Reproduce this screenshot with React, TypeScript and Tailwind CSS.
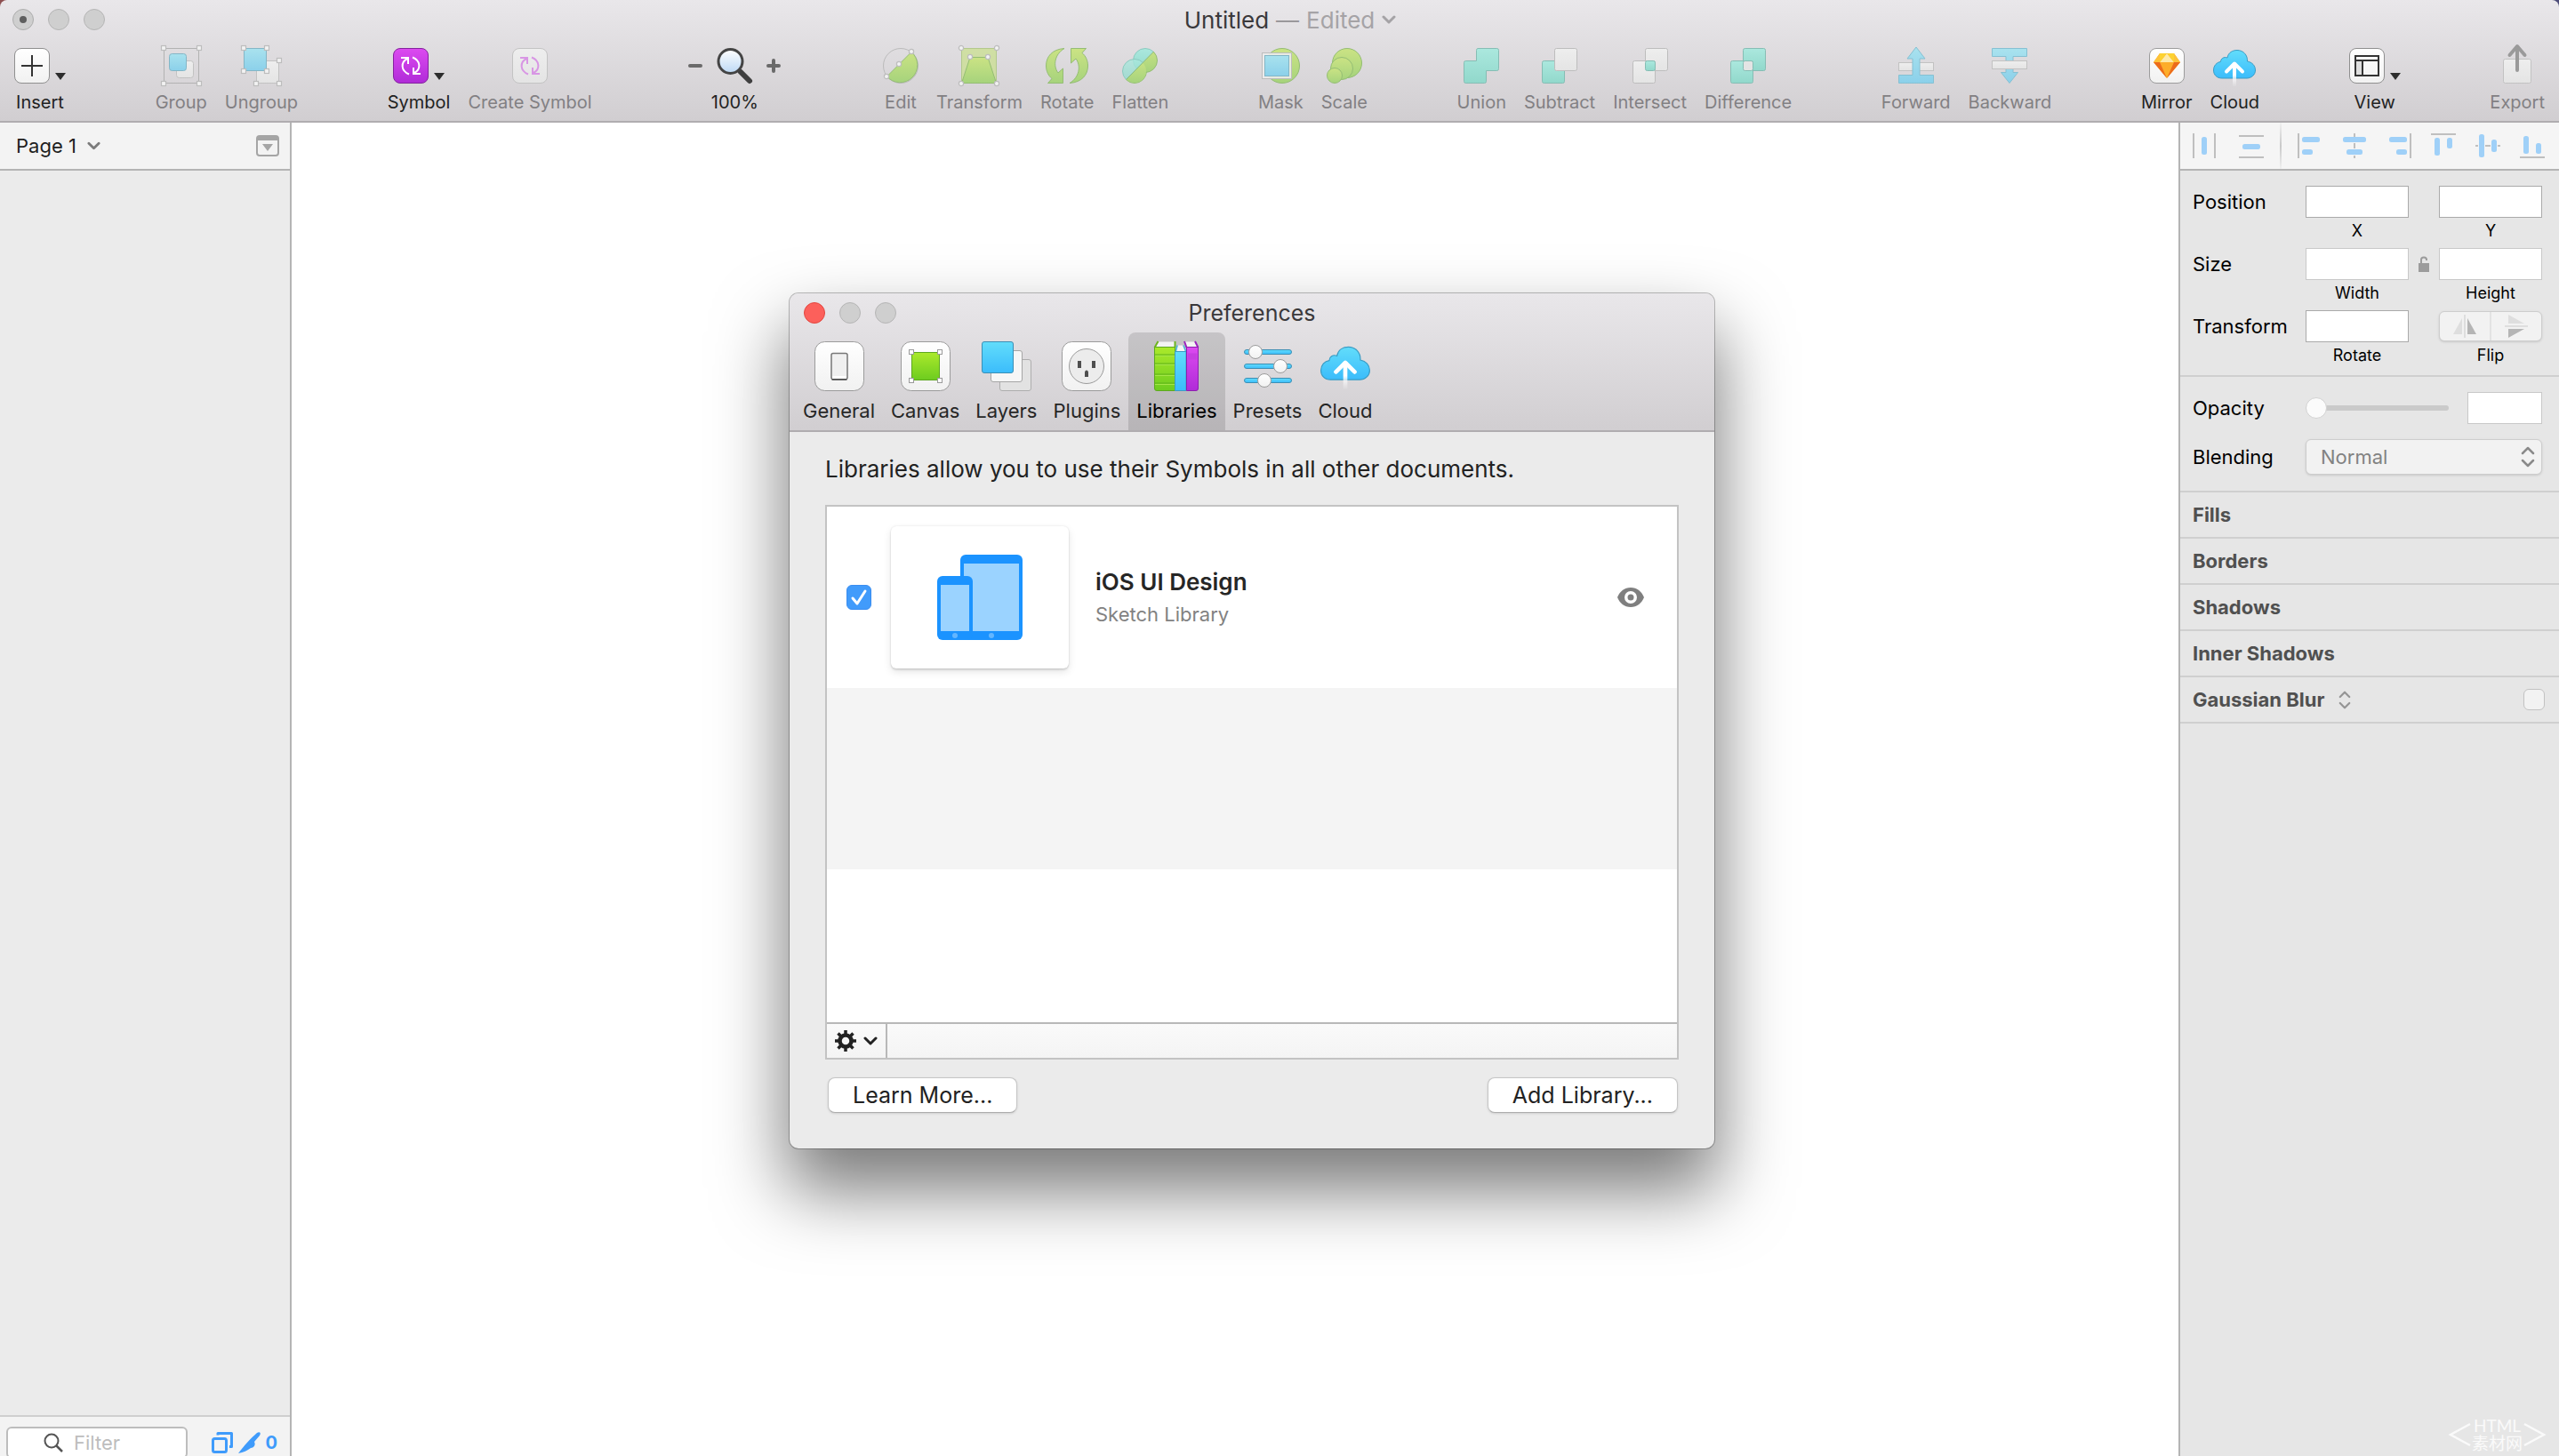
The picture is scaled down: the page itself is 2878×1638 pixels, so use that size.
import { useState } from "react";
import type { ReactNode } from "react";

const toneDark = "text-[#222]";
const toneMuted = "text-[#828083]";

interface ToolProps {
  label: string;
  icon: ReactNode;
  disabled?: boolean;
  menu?: boolean;
}

function Tool({ label, icon, disabled, menu }: ToolProps) {
  return (
    <button type="button" disabled={disabled} className="flex flex-col items-center">
      <span className="flex h-10 items-end gap-[6px]">
        {icon}
        {menu && (
          <svg width="12" height="12" viewBox="0 0 12 12" className="shrink-0">
            <path d="M0 0H12L6 8Z" fill="#2d2d2d" />
          </svg>
        )}
      </span>
      <span className={`mt-[9px] text-[20px] leading-6 whitespace-nowrap ${disabled ? toneMuted : toneDark}`}>
        {label}
      </span>
    </button>
  );
}

function ToolGroup({ children }: { children: ReactNode }) {
  return <div className="flex gap-5">{children}</div>;
}

function Icon({ w = 40, h = 40, children }: { w?: number; h?: number; children: ReactNode }) {
  return (
    <svg width={w} height={h} viewBox={`0 0 ${w} ${h}`} fill="none" className="shrink-0 overflow-visible">
      {children}
    </svg>
  );
}

// Gradients shared by every drawing on the page
function Gradients() {
  const stops = [
    ["g-white", "#ffffff", "#f1f1f1"],
    ["g-fade", "#eeeeee", "#e4e4e4"],
    ["g-sky", "#a9e2ee", "#8bd0ea"],
    ["g-lime", "#cbe384", "#a6d37c"],
    ["g-teal", "#abe8de", "#91d8cb"],
    ["g-magenta", "#dc4bf0", "#b02bd8"],
    ["g-blue", "#62ddfb", "#3bbcfb"],
    ["g-green", "#abe92b", "#6dcc1f"],
    ["g-lens", "#ffffff", "#bcd8f4"],
  ];
  return (
    <svg width="0" height="0" className="absolute">
      <defs>
        {stops.map(([id, from, to]) => (
          <linearGradient key={id} id={id} x1="0" y1="0" x2="0" y2="1">
            <stop offset="0" stopColor={from} />
            <stop offset="1" stopColor={to} />
          </linearGradient>
        ))}
        <linearGradient id="g-stem" gradientUnits="userSpaceOnUse" x1="0" y1="16" x2="0" y2="44">
          <stop offset="0.5" stopColor="#fff" />
          <stop offset="1" stopColor="#fff" stopOpacity="0" />
        </linearGradient>
        <clipPath id="c-upper">
          <path d="M-2 -2H41L-2 42Z" />
        </clipPath>
        <clipPath id="c-lower">
          <path d="M41 -2V42H-2Z" />
        </clipPath>
      </defs>
    </svg>
  );
}

function Handles({ at, round }: { at: number[][]; round?: boolean }) {
  return (
    <g fill="#f2f2f2" stroke="#bdbdbd" strokeWidth="1.2">
      {at.map(([x, y]) =>
        round ? (
          <circle key={`${x}-${y}`} cx={x} cy={y} r="2.6" />
        ) : (
          <rect key={`${x}-${y}`} x={x - 2.5} y={y - 2.5} width="5" height="5" />
        )
      )}
    </g>
  );
}

const InsertIcon = (
  <Icon>
    <rect x="0.5" y="0.5" width="39" height="39" rx="7.5" fill="url(#g-white)" stroke="#8f8f8f" />
    <path d="M20 8V32M8 20H32" stroke="#333" strokeWidth="2" />
  </Icon>
);

const GroupIcon = (
  <Icon>
    <rect x="0.5" y="0.5" width="39" height="39" stroke="#b2b2b2" />
    <rect x="14.5" y="14.5" width="19" height="19" rx="3" fill="url(#g-fade)" stroke="#c2c2c2" />
    <rect x="6.5" y="6.5" width="19" height="19" rx="3" fill="url(#g-sky)" stroke="#84b6c6" />
    <Handles at={[[0, 0], [40, 0], [0, 40], [40, 40]]} />
  </Icon>
);

const UngroupIcon = (
  <Icon>
    <rect x="14.5" y="14.5" width="25" height="25" fill="url(#g-fade)" stroke="#c2c2c2" />
    <rect x="0.5" y="0.5" width="25" height="25" fill="url(#g-sky)" stroke="#84b6c6" />
    <Handles at={[[0, 0], [26, 0], [0, 26], [26, 26], [40, 14], [14, 40], [40, 40]]} />
  </Icon>
);

const symbolArrows = "M9 11H17V18M18 29.5C8.500 25.500 8.500 16 16 12M31 29H23V22M22 10.500C31.500 14.500 31.500 24 24 28";

const SymbolIcon = (
  <Icon>
    <rect x="0.5" y="0.5" width="39" height="39" rx="7.5" fill="url(#g-magenta)" stroke="#84239e" />
    <path d={symbolArrows} stroke="#fff" strokeWidth="2" />
  </Icon>
);

const CreateSymbolIcon = (
  <Icon>
    <rect x="0.5" y="0.5" width="39" height="39" rx="7.5" fill="url(#g-fade)" stroke="#c3c3c3" />
    <path d={symbolArrows} stroke="#d896e4" strokeWidth="2" />
  </Icon>
);

const EditIcon = (
  <Icon>
    <circle cx="20" cy="20" r="19.5" stroke="#bbb" />
    <path d="M4.500 32L32 4.500A19.500 19.500 0 1 1 4.500 32Z" fill="url(#g-lime)" stroke="#94bd74" />
    <Handles round at={[[4, 32], [18, 18], [32, 4]]} />
  </Icon>
);

const TransformIcon = (
  <Icon>
    <rect x="0.5" y="0.5" width="39" height="39" fill="#c9e08a" fillOpacity="0.7" stroke="#b3c98c" />
    <path d="M10 10.500H30L39.500 39.500H0.500Z" fill="url(#g-lime)" stroke="#94bd74" />
    <Handles round at={[[0, 0], [40, 0], [10, 10], [30, 10], [0, 40], [40, 40]]} />
  </Icon>
);

const RotateIcon = (
  <Icon w={48}>
    <g fill="url(#g-lime)" stroke="#94bd74">
      <path d="M21 0.500C7 1.500 0.500 10 0.500 20C0.500 26 3 31 7 34.500L2.500 39.500H19.500V23L14 28C8 20 10 7 21 0.500Z" />
      <path d="M27 39.500C41 38.500 47.500 30 47.500 20C47.500 14 45 9 41 5.500L45.500 0.500H28.500V17L34 12C40 20 38 33 27 39.500Z" />
    </g>
  </Icon>
);

const FlattenIcon = (
  <Icon>
    <g clipPath="url(#c-lower)" fill="url(#g-lime)">
      <circle cx="14" cy="26" r="13.500" stroke="#94bd74" />
      <circle cx="26" cy="14" r="13.500" stroke="#94bd74" />
      <circle cx="14" cy="26" r="13" />
    </g>
    <g clipPath="url(#c-upper)" fill="url(#g-teal)" stroke="#8bcabf">
      <circle cx="26" cy="14" r="13.500" />
      <circle cx="14" cy="26" r="13.500" fillOpacity="0.8" />
    </g>
    <path d="M35.500 4L4.500 35.500" stroke="#86b982" />
  </Icon>
);

const MaskIcon = (
  <Icon w={43}>
    <circle cx="23" cy="20" r="19.500" fill="url(#g-lime)" stroke="#94bd74" />
    <rect x="0.5" y="5.500" width="33" height="29" fill="#ececec" fillOpacity="0.9" stroke="#bdbdbd" />
    <rect x="3.500" y="8.500" width="27" height="23" fill="url(#g-sky)" stroke="#84b6c6" />
  </Icon>
);

const ScaleIcon = (
  <Icon>
    <g fill="url(#g-lime)" stroke="#94bd74">
      <circle cx="23" cy="17" r="16.500" />
      <circle cx="17" cy="23" r="12.500" />
      <circle cx="9" cy="31" r="8.500" />
    </g>
  </Icon>
);

const UnionIcon = (
  <Icon>
    <path
      d="M16 0.500H37.500A2 2 0 0 1 39.500 2.500V23.500A2 2 0 0 1 37.500 25.500H25.500V37.500A2 2 0 0 1 23.500 39.500H2.500A2 2 0 0 1 0.500 37.500V16.500A2 2 0 0 1 2.500 14.500H14.500V2.500A2 2 0 0 1 16 0.500Z"
      fill="url(#g-teal)"
      stroke="#86bdb4"
    />
  </Icon>
);

const SubtractIcon = (
  <Icon>
    <rect x="0.5" y="14.500" width="25" height="25" rx="2" fill="url(#g-teal)" stroke="#86bdb4" />
    <rect x="14.500" y="0.5" width="25" height="25" rx="2" fill="url(#g-fade)" stroke="#bdbdbd" />
  </Icon>
);

const IntersectIcon = (
  <Icon>
    <rect x="14.500" y="0.5" width="25" height="25" rx="2" fill="url(#g-fade)" stroke="#bdbdbd" />
    <rect x="0.5" y="14.500" width="25" height="25" rx="2" fill="url(#g-fade)" stroke="#bdbdbd" />
    <rect x="14.500" y="14.500" width="11" height="11" rx="2" fill="url(#g-teal)" stroke="#86bdb4" />
  </Icon>
);

const DifferenceIcon = (
  <Icon>
    <rect x="14.500" y="0.5" width="25" height="25" rx="2" fill="url(#g-teal)" stroke="#86bdb4" />
    <rect x="0.5" y="14.500" width="25" height="25" rx="2" fill="url(#g-teal)" stroke="#86bdb4" />
    <rect x="14.500" y="14.500" width="11" height="11" rx="2" fill="#e4e4e4" stroke="#86bdb4" />
  </Icon>
);

const ForwardIcon = (
  <Icon>
    <rect x="0.5" y="16.500" width="39" height="9" fill="url(#g-fade)" stroke="#c2c2c2" />
    <path
      d="M20 -1L30 12H24V30.500H39.500V39.500H0.500V30.500H16V12H10Z"
      fill="url(#g-sky)"
      stroke="#86c0d2"
    />
  </Icon>
);

const BackwardIcon = (
  <Icon>
    <path
      d="M0.500 0.500H39.500V9.500H24V27.500H29.500L20 39.500L10.500 27.500H16V9.500H0.500Z"
      fill="url(#g-sky)"
      stroke="#86c0d2"
    />
    <rect x="0.5" y="14.500" width="39" height="9" fill="url(#g-fade)" stroke="#c2c2c2" />
  </Icon>
);

const MirrorIcon = (
  <Icon>
    <rect x="0.5" y="0.5" width="39" height="39" rx="7.500" fill="url(#g-white)" stroke="#9c9c9c" />
    <path d="M12 6H28L35 16L20 34L5 16Z" fill="#fdad2a" />
    <path d="M12 6L5 16H12ZM28 6L35 16H28Z" fill="#fdc23a" />
    <path d="M20 6L12 16H28Z" fill="#feeaa9" />
    <path d="M12 6H20L12 16ZM28 6H20L28 16Z" fill="#fdd231" />
    <path d="M5 16H12L20 34ZM35 16H28L20 34Z" fill="#ec6c1c" />
  </Icon>
);

const cloudShapes = (
  <>
    <path
      d="M10 34C4 34 0.500 30 0.500 25C0.500 20 4 16 8.500 15.500C8.500 12 12 9.500 16 11C17 5 22 2.500 27 2.500C34 2.500 39 8 38.500 15C44 16 47.500 20 47.500 25C47.500 30 43 34 38 34Z"
      fill="url(#g-blue)"
      stroke="#3b9cc4"
    />
    <path d="M22 17H26V43H22Z" fill="url(#g-stem)" />
    <path d="M15 26.500L24 17.500L33 26.500" stroke="#fff" strokeWidth="4" strokeLinecap="round" strokeLinejoin="round" />
  </>
);

const CloudIcon = <Icon w={48}>{cloudShapes}</Icon>;

const ViewIcon = (
  <Icon>
    <rect x="0.5" y="0.5" width="39" height="39" rx="7.500" fill="url(#g-white)" stroke="#8f8f8f" />
    <rect x="7" y="15" width="8" height="16" fill="#dedede" />
    <path d="M7 9H33V31H7ZM7 14H33M15 14V31" stroke="#333" strokeWidth="2" />
  </Icon>
);

const ExportIcon = (
  <Icon w={32}>
    <rect x="0.5" y="12.500" width="31" height="27" rx="2" fill="url(#g-fade)" stroke="#c2c2c2" />
    <path d="M16 25V-1M7.500 8L16 -2L24.500 8" stroke="#9a9a9a" strokeWidth="4" strokeLinecap="round" strokeLinejoin="round" />
  </Icon>
);

function ZoomTool() {
  return (
    <div className="flex flex-col items-center pr-[14px] pl-2">
      <div className="flex h-10 items-center gap-4">
        <button type="button" aria-label="Zoom out">
          <Icon w={16} h={16}>
            <path d="M2 8H14" stroke="#6a6a6a" strokeWidth="4" strokeLinecap="round" />
          </Icon>
        </button>
        <Icon>
          <path d="M27 27L37 37" stroke="#3f3f3f" strokeWidth="6" strokeLinecap="round" />
          <circle cx="15.500" cy="15" r="13.500" fill="url(#g-lens)" stroke="#444" strokeWidth="3" />
        </Icon>
        <button type="button" aria-label="Zoom in">
          <Icon w={16} h={16}>
            <path d="M2 8H14M8 2V14" stroke="#6a6a6a" strokeWidth="4" strokeLinecap="round" />
          </Icon>
        </button>
      </div>
      <span className={`mt-[9px] text-[20px] leading-6 ${toneDark}`}>100%</span>
    </div>
  );
}

function Chevron({ color, w = 16 }: { color: string; w?: number }) {
  return (
    <svg width={w} height="10" viewBox="0 0 16 10" fill="none" className="shrink-0">
      <path d="M2 2L8 8L14 2" stroke={color} strokeWidth="3" strokeLinecap="round" strokeLinejoin="round" />
    </svg>
  );
}

function Light({ className, dot }: { className: string; dot?: boolean }) {
  return (
    <button type="button" aria-label="Window control" className={`flex size-6 items-center justify-center rounded-full border ${className}`}>
      {dot && <span className="size-2 rounded-full bg-[#5f5f5f]" />}
    </button>
  );
}

function AppHeader() {
  return (
    <div className="bg-linear-to-r from-[#8d4f50] to-[#4c4c78]">
      <header className="h-[138px] rounded-t-lg border-b-2 border-[#b0adb0] bg-linear-to-b from-[#e9e7ea] to-[#d1ced1]">
        <div className="grid h-11 grid-cols-3 items-center">
          <div className="flex gap-4 pl-[14px]">
            <Light className="border-[#adadad] bg-[#cfcfcf]" dot />
            <Light className="border-[#b5b5b5] bg-[#cfcfcf]" />
            <Light className="border-[#b5b5b5] bg-[#cfcfcf]" />
          </div>
          <h1 className="flex items-center justify-center gap-2 pl-6 text-[26px] text-[#3a393b]">
            Untitled
            <span className="text-[#9a989b]">—</span>
            <span className="text-[#a5a3a6]">Edited</span>
            <Chevron color="#a5a3a6" />
          </h1>
        </div>
        <div className="flex justify-between px-4 pt-[10px]">
          <Tool label="Insert" icon={InsertIcon} menu />
          <ToolGroup>
            <Tool label="Group" icon={GroupIcon} disabled />
            <Tool label="Ungroup" icon={UngroupIcon} disabled />
          </ToolGroup>
          <ToolGroup>
            <Tool label="Symbol" icon={SymbolIcon} menu />
            <Tool label="Create Symbol" icon={CreateSymbolIcon} disabled />
          </ToolGroup>
          <ZoomTool />
          <ToolGroup>
            <Tool label="Edit" icon={EditIcon} disabled />
            <Tool label="Transform" icon={TransformIcon} disabled />
            <Tool label="Rotate" icon={RotateIcon} disabled />
            <Tool label="Flatten" icon={FlattenIcon} disabled />
          </ToolGroup>
          <ToolGroup>
            <Tool label="Mask" icon={MaskIcon} disabled />
            <Tool label="Scale" icon={ScaleIcon} disabled />
          </ToolGroup>
          <ToolGroup>
            <Tool label="Union" icon={UnionIcon} disabled />
            <Tool label="Subtract" icon={SubtractIcon} disabled />
            <Tool label="Intersect" icon={IntersectIcon} disabled />
            <Tool label="Difference" icon={DifferenceIcon} disabled />
          </ToolGroup>
          <ToolGroup>
            <Tool label="Forward" icon={ForwardIcon} disabled />
            <Tool label="Backward" icon={BackwardIcon} disabled />
          </ToolGroup>
          <ToolGroup>
            <Tool label="Mirror" icon={MirrorIcon} />
            <Tool label="Cloud" icon={CloudIcon} />
          </ToolGroup>
          <Tool label="View" icon={ViewIcon} menu />
          <Tool label="Export" icon={ExportIcon} disabled />
        </div>
      </header>
    </div>
  );
}

function PagesPanel() {
  return (
    <aside className="flex w-[328px] shrink-0 flex-col border-r-2 border-[#b4b4b4] bg-[#ebebeb]">
      <div className="flex h-[54px] items-center justify-between border-b-2 border-[#b4b4b4] bg-[#f3f3f3] pr-3 pl-[18px]">
        <button type="button" className="flex items-center gap-3 text-[22px] text-[#1e1e1e]">
          Page 1
          <Chevron color="#7b7b7b" w={15} />
        </button>
        <button type="button" aria-label="Toggle page list">
          <Icon w={26} h={24}>
            <rect x="1" y="1" width="24" height="22" rx="3" fill="#f3f3f3" stroke="#a5a5a5" strokeWidth="2" />
            <path d="M1 2H25V6H1Z" fill="#a5a5a5" />
            <path d="M7 10H19L13 18Z" fill="#a5a5a5" />
          </Icon>
        </button>
      </div>
      <div className="flex-1" />
      <div className="flex h-[46px] shrink-0 items-start overflow-hidden border-t-2 border-[#cfcfcf] bg-[#f3f3f3] pt-[11px] pr-[14px] pl-[7px]">
        <label className="flex h-9 w-[204px] shrink-0 items-center gap-3 rounded-md border-2 border-[#bdbdbd] bg-white pl-10">
          <Icon w={22} h={22}>
            <circle cx="9" cy="9" r="7.500" stroke="#555" strokeWidth="2" />
            <path d="M14.500 14.500L21 21" stroke="#555" strokeWidth="2.500" />
          </Icon>
          <input
            type="text"
            aria-label="Filter"
            placeholder="Filter"
            className="w-24 bg-transparent text-[22px] outline-none placeholder:text-[#bdbdbd]"
          />
        </label>
        <div className="ml-auto flex items-center gap-[6px] pt-[6px] text-[#3f9bfb]">
          <Icon w={24} h={24}>
            <path d="M7 3.500V1.500H22.500V16.500H20" stroke="currentColor" strokeWidth="3" strokeLinejoin="round" />
            <rect x="1.500" y="7.500" width="15" height="15" rx="2" stroke="currentColor" strokeWidth="3" />
          </Icon>
          <Icon w={25} h={24}>
            <path d="M0 24C6 16 14 7 21 1C24 -1 26 1 24 4L18 11C20 15 17 18 14 18C10 21 6 23 0 24Z" fill="currentColor" />
          </Icon>
          <span className="text-[20px] leading-6 font-bold">0</span>
        </div>
      </div>
    </aside>
  );
}

const distributeIcons = [
  { name: "Distribute horizontally", lines: "M1 0V28M25 0V28", bars: [[10, 4, 6, 20]] },
  { name: "Distribute vertically", lines: "M0 3H28M0 27H28", bars: [[4, 12, 20, 6]] },
];

const alignIcons = [
  { name: "Align left", lines: "M1 0V28", bars: [[5, 4, 20, 6], [5, 18, 12, 6]] },
  { name: "Align center", lines: "M14 0V4M14 11V17M14 25V28", bars: [[1, 4, 26, 6], [5, 18, 18, 6]] },
  { name: "Align right", lines: "M27 0V28", bars: [[3, 4, 20, 6], [11, 18, 12, 6]] },
  { name: "Align top", lines: "M0 1H28", bars: [[4, 5, 6, 20], [18, 5, 6, 12]] },
  { name: "Align middle", lines: "M0 14H3M11 14H17M25 14H28", bars: [[4, 1, 6, 26], [18, 7, 6, 14]] },
  { name: "Align bottom", lines: "M0 27H28", bars: [[4, 3, 6, 20], [18, 11, 6, 12]] },
];

function AlignButton({ name, lines, bars }: { name: string; lines: string; bars: number[][] }) {
  return (
    <button type="button" aria-label={name}>
      <Icon w={28} h={28}>
        <path d={lines} stroke="#bfbfbf" strokeWidth="2" />
        {bars.map(([x, y, w, h]) => (
          <rect key={`${x}-${y}`} x={x} y={y} width={w} height={h} rx="2.500" fill="#9fd0f8" />
        ))}
      </Icon>
    </button>
  );
}

function Field({ id, caption, strong }: { id: string; caption: string; strong?: boolean }) {
  return (
    <div className="flex w-[116px] flex-col">
      <input
        id={id}
        type="text"
        className={`h-9 w-full border bg-white px-2 text-[20px] outline-none ${strong ? "border-[#aaa]" : "border-[#c8c8c8]"}`}
      />
      <label htmlFor={id} className="mt-1 text-center text-[18px] leading-[22px]">
        {caption}
      </label>
    </div>
  );
}

function UpDown({ w, h, color }: { w: number; h: number; color: string }) {
  return (
    <svg width={w} height={h} viewBox="0 0 16 24" fill="none" className="pointer-events-none">
      <path d="M2 8L8 2L14 8M2 16L8 22L14 16" stroke={color} strokeWidth="2.500" strokeLinecap="round" strokeLinejoin="round" />
    </svg>
  );
}

const rowLabel = "w-[127px] text-[22px] leading-9";

function Inspector() {
  const [opacity, setOpacity] = useState(0);
  return (
    <aside className="w-[428px] shrink-0 border-l-2 border-[#b4b4b4] bg-[#e6e6e6] text-black">
      <div className="flex h-[54px] items-center border-b-2 border-[#b4b4b4] bg-[#f5f5f5] pr-4 pl-[14px]">
        <div className="flex gap-6">
          {distributeIcons.map((item) => (
            <AlignButton key={item.name} {...item} />
          ))}
        </div>
        <div className="mx-[18px] w-0.5 self-stretch bg-linear-to-b from-[#f0f0f0] via-[#c9c9c9] to-[#f0f0f0]" />
        <div className="flex flex-1 justify-between">
          {alignIcons.map((item) => (
            <AlignButton key={item.name} {...item} />
          ))}
        </div>
      </div>

      <section className="border-b-2 border-[#cfcfcf] pt-[17px] pb-[3px] pl-[14px]">
        <div className="flex h-[70px]">
          <span className={rowLabel}>Position</span>
          <Field id="pos-x" caption="X" strong />
          <div className="w-[34px]" />
          <Field id="pos-y" caption="Y" strong />
        </div>
        <div className="flex h-[70px]">
          <span className={rowLabel}>Size</span>
          <Field id="size-w" caption="Width" />
          <div className="flex h-9 w-[34px] items-center justify-center">
            <Icon w={12} h={18}>
              <rect x="0" y="8" width="12" height="10" fill="#9c9c9c" />
              <path d="M3 8V4C3 0.500 9 0.500 9 4V5" stroke="#9c9c9c" strokeWidth="2" />
            </Icon>
          </div>
          <Field id="size-h" caption="Height" />
        </div>
        <div className="flex h-[70px]">
          <span className={rowLabel}>Transform</span>
          <Field id="rotate" caption="Rotate" strong />
          <div className="w-[34px]" />
          <div className="flex w-[116px] flex-col">
            <div className="my-px flex h-[34px] divide-x-2 divide-[#e3e3e3] rounded-md border border-[#cdcdcd] bg-[#f2f2f2] shadow-sm">
              <button type="button" disabled aria-label="Flip horizontally" className="flex flex-1 items-center justify-center">
                <Icon w={26} h={26}>
                  <path d="M0 22L10 4V22Z" fill="#dedede" />
                  <path d="M13 0V26" stroke="#dedede" strokeWidth="2" />
                  <path d="M26 22L16 4V22Z" fill="#b5b5b5" />
                </Icon>
              </button>
              <button type="button" disabled aria-label="Flip vertically" className="flex flex-1 items-center justify-center">
                <Icon w={26} h={26}>
                  <path d="M4 0L22 10H4Z" fill="#dedede" />
                  <path d="M0 13H26" stroke="#dedede" strokeWidth="2" />
                  <path d="M4 26L22 16H4Z" fill="#b5b5b5" />
                </Icon>
              </button>
            </div>
            <span className="mt-1 text-center text-[18px] leading-[22px]">Flip</span>
          </div>
        </div>
      </section>

      <section className="flex flex-col gap-[17px] border-b-2 border-[#cfcfcf] pt-[17px] pr-[19px] pb-[18px] pl-[14px]">
        <div className="flex h-9 items-center">
          <label htmlFor="opacity" className={rowLabel}>
            Opacity
          </label>
          <input
            id="opacity"
            type="range"
            min={0}
            max={100}
            value={opacity}
            onChange={(e) => setOpacity(Number(e.target.value))}
            className="h-[6px] w-[161px] appearance-none rounded-full bg-[#cacaca] [&::-webkit-slider-thumb]:size-6 [&::-webkit-slider-thumb]:appearance-none [&::-webkit-slider-thumb]:rounded-full [&::-webkit-slider-thumb]:border [&::-webkit-slider-thumb]:border-[#d2d2d2] [&::-webkit-slider-thumb]:bg-[#fbfbfb]"
          />
          <input
            type="text"
            aria-label="Opacity value"
            className="ml-auto h-9 w-[84px] border border-[#c8c8c8] bg-white px-2 text-[20px] outline-none"
          />
        </div>
        <div className="flex h-10 items-center">
          <label htmlFor="blending" className={rowLabel}>
            Blending
          </label>
          <div className="relative flex-1">
            <select
              id="blending"
              disabled
              className="block h-10 w-full appearance-none rounded-md border border-[#cdcdcd] bg-[#f2f2f2] pl-4 text-[22px] text-[#828282] shadow-sm"
            >
              <option>Normal</option>
            </select>
            <span className="absolute inset-y-0 right-2 flex items-center">
              <UpDown w={16} h={26} color="#8a8a8a" />
            </span>
          </div>
        </div>
      </section>

      {["Fills", "Borders", "Shadows", "Inner Shadows"].map((name) => (
        <h2 key={name} className="h-[52px] border-b-2 border-[#cfcfcf] pl-[14px] text-[22px] leading-[50px] font-bold text-[#505050]">
          {name}
        </h2>
      ))}
      <div className="flex h-[52px] items-center border-b-2 border-[#cfcfcf] pr-4 pl-[14px]">
        <label htmlFor="blur" className="text-[22px] font-bold text-[#505050]">
          Gaussian Blur
        </label>
        <span className="ml-4">
          <UpDown w={14} h={21} color="#949494" />
        </span>
        <input id="blur" type="checkbox" className="ml-auto size-6 appearance-none rounded-md border border-[#c2c2c2] bg-[#f2f2f2]" />
      </div>
    </aside>
  );
}

const GeneralIcon = (
  <Icon w={56} h={56}>
    <rect x="0.5" y="0.5" width="55" height="55" rx="11" fill="url(#g-white)" stroke="#9b9b9b" />
    <rect x="19" y="13.500" width="18" height="29" rx="2" fill="#f0f0f0" stroke="#777" strokeWidth="1.500" />
    <path d="M20 39H36V42H20Z" fill="#fff" />
    <path d="M19.500 43H36.500" stroke="#444" strokeWidth="1.500" />
  </Icon>
);

const CanvasIcon = (
  <Icon w={56} h={56}>
    <rect x="0.5" y="0.5" width="55" height="55" rx="11" fill="url(#g-white)" stroke="#9b9b9b" />
    <rect x="12.500" y="12.500" width="31" height="31" fill="url(#g-green)" stroke="#5da81e" />
    <g fill="#fff" stroke="#9a9a9a">
      <rect x="9.500" y="9.500" width="5" height="5" />
      <rect x="41.500" y="9.500" width="5" height="5" />
      <rect x="9.500" y="41.500" width="5" height="5" />
      <rect x="41.500" y="41.500" width="5" height="5" />
    </g>
  </Icon>
);

const LayersIcon = (
  <Icon w={56} h={56}>
    <rect x="20.500" y="20.500" width="35" height="35" rx="2.500" fill="#e2e2e2" stroke="#adadad" />
    <rect x="10.500" y="10.500" width="35" height="35" rx="2.500" fill="#f6f6f6" stroke="#a5a5a5" />
    <rect x="0.5" y="0.5" width="35" height="35" rx="2.500" fill="url(#g-blue)" stroke="#3b8fb5" />
  </Icon>
);

const PluginsIcon = (
  <Icon w={56} h={56}>
    <rect x="0.5" y="0.5" width="55" height="55" rx="11" fill="url(#g-white)" stroke="#9b9b9b" />
    <circle cx="28" cy="28" r="19.500" fill="#ececec" stroke="#9b9b9b" />
    <path d="M18 22H22V30H18ZM34 22H38V30H34ZM26 40V35C26 31.500 30 31.500 30 35V40Z" fill="#4e4e4e" />
  </Icon>
);

const LibrariesIcon = (
  <Icon w={50} h={56}>
    <path d="M1 7L5 0.500H23.500V7Z" fill="#f3f3f3" />
    <path d="M0.500 7L4.500 0M23.500 0V7" stroke="#6db51f" strokeWidth="2" />
    <path d="M0.500 6.500H23.500V55.500H3A2.500 2.500 0 0 1 0.500 53Z" fill="url(#g-green)" stroke="#5da81e" />
    <path d="M1 15H23M1 25H23M1 37H23M1 47H23" stroke="#62b31c" />
    <path d="M1 16.500H23M1 26.500H23M1 38.500H23M1 48.500H23" stroke="#a4e648" />
    <path d="M24.500 11L27 4.500H32L35 11Z" fill="#f4f4f4" />
    <path d="M24.500 11L26 4.500M35.500 11L33 4.500" stroke="#49b7e0" strokeWidth="1.500" />
    <path d="M23.500 11.500H36V55.500H23.500Z" fill="url(#g-blue)" stroke="#3b9cc4" />
    <path d="M37 7L34.500 0.500H46L49.500 7Z" fill="#f3f3f3" />
    <path d="M36.500 7L34 0M49.500 7L46 0" stroke="#9c22bf" strokeWidth="2" />
    <path d="M36.500 6.500H49.500V53A2.500 2.500 0 0 1 47 55.500H36.500Z" fill="url(#g-magenta)" stroke="#8d1fae" />
    <path d="M38 13.500H48V20.500H38Z" fill="#c63fe0" />
  </Icon>
);

const PresetsIcon = (
  <Icon w={54} h={56}>
    <g fill="url(#g-blue)" stroke="#3b8fb5">
      <rect x="0.5" y="9.500" width="53" height="5" rx="2.500" />
      <rect x="0.5" y="25.500" width="53" height="5" rx="2.500" />
      <rect x="0.5" y="41.500" width="53" height="5" rx="2.500" />
    </g>
    <g fill="url(#g-white)" stroke="#9b9b9b">
      <circle cx="13" cy="12" r="7.500" />
      <circle cx="41" cy="28" r="7.500" />
      <circle cx="23" cy="44" r="7.500" />
    </g>
  </Icon>
);

const PrefCloudIcon = (
  <svg width="56" height="56" viewBox="0 -3 48 48" fill="none" className="shrink-0 overflow-visible">
    {cloudShapes}
  </svg>
);

const tabs = [
  { name: "General", icon: GeneralIcon },
  { name: "Canvas", icon: CanvasIcon },
  { name: "Layers", icon: LayersIcon },
  { name: "Plugins", icon: PluginsIcon },
  { name: "Libraries", icon: LibrariesIcon },
  { name: "Presets", icon: PresetsIcon },
  { name: "Cloud", icon: PrefCloudIcon },
];

function DevicesArt() {
  return (
    <svg width="96" height="96" viewBox="0 0 96 96">
      <rect x="26" y="0" width="70" height="96" rx="6" fill="#1b93ff" />
      <rect x="30" y="10" width="62" height="76" fill="#9bd3ff" />
      <rect x="0" y="24" width="40" height="72" rx="6" fill="#1b93ff" />
      <rect x="4" y="34" width="32" height="52" fill="#9bd3ff" />
      <circle cx="20" cy="91" r="3" fill="#63b6ff" />
      <circle cx="61" cy="91" r="3" fill="#63b6ff" />
    </svg>
  );
}

function GearIcon() {
  return (
    <svg width="24" height="24" viewBox="0 0 24 24" fill="none" stroke="#222">
      <circle cx="12" cy="12" r="6.500" strokeWidth="4.500" />
      <path
        d="M12 0V5M12 19V24M0 12H5M19 12H24M3.500 3.500L7 7M17 17L20.500 20.500M3.500 20.500L7 17M17 7L20.500 3.500"
        strokeWidth="3.500"
      />
    </svg>
  );
}

const pushButton =
  "h-10 rounded-lg border border-[#c6c6c6] border-b-[#adadad] bg-white px-[27px] text-[25px] leading-none text-[#222] shadow-sm";

function Preferences() {
  const [active, setActive] = useState("Libraries");
  const [enabled, setEnabled] = useState(true);

  return (
    <div
      role="dialog"
      aria-label="Preferences"
      className="absolute top-[330px] left-[888px] w-[1040px] overflow-hidden rounded-[10px] bg-[#ebebeb] shadow-[0_0_0_1px_rgba(0,0,0,0.25),0_44px_80px_4px_rgba(0,0,0,0.52)]"
    >
      <div className="border-b-2 border-[#b0adb0] bg-linear-to-b from-[#e9e7ea] to-[#d1ced1]">
        <div className="grid h-11 grid-cols-3 items-center">
          <div className="flex gap-4 pl-4">
            <Light className="border-[#e2463f] bg-[#fc605b]" />
            <Light className="border-[#b5b5b5] bg-[#cfcfcf]" />
            <Light className="border-[#b5b5b5] bg-[#cfcfcf]" />
          </div>
          <h2 className="pt-0.5 text-center text-[25px] text-[#3a393b]">Preferences</h2>
        </div>
        <div role="tablist" className="flex px-[6px]">
          {tabs.map((tab) => (
            <button
              key={tab.name}
              type="button"
              role="tab"
              aria-selected={tab.name === active}
              onClick={() => setActive(tab.name)}
              className={`flex flex-col items-center rounded-t-lg px-[9px] pt-[10px] pb-2 ${
                tab.name === active ? "bg-black/12 text-black" : "text-[#262626]"
              }`}
            >
              {tab.icon}
              <span className="mt-2 text-[22px] leading-7">{tab.name}</span>
            </button>
          ))}
        </div>
      </div>

      <div className="px-10 pt-[26px] pb-10">
        <p className="mb-6 text-[26px] leading-8 text-[#222]">
          Libraries allow you to use their Symbols in all other documents.
        </p>
        <div className="border-2 border-[#c3c3c3] bg-white">
          <ul>
            <li className="flex h-[204px] items-center pr-[37px] pl-[22px]">
              <span className="relative size-7">
                <input
                  id="lib-ios"
                  type="checkbox"
                  checked={enabled}
                  onChange={(e) => setEnabled(e.target.checked)}
                  className="block size-7 appearance-none rounded-md border border-[#c2c2c2] bg-white checked:border-[#3a8df0] checked:bg-[#419bfb]"
                />
                {enabled && (
                  <svg width="28" height="28" viewBox="0 0 28 28" fill="none" className="pointer-events-none absolute inset-0">
                    <path d="M7 15L12 21L21 7" stroke="#fff" strokeWidth="3" strokeLinecap="round" strokeLinejoin="round" />
                  </svg>
                )}
              </span>
              <div className="ml-[22px] flex h-40 w-[200px] items-center justify-center rounded-md bg-white shadow-[0_0_2px_rgba(0,0,0,0.12),0_2px_2px_rgba(0,0,0,0.1),0_4px_10px_rgba(0,0,0,0.1)]">
                <DevicesArt />
              </div>
              <label htmlFor="lib-ios" className="ml-[30px] flex flex-col pt-0.5">
                <span className="text-[26px] leading-9 font-semibold text-[#262626]">iOS UI Design</span>
                <span className="text-[22px] leading-9 text-[#828282]">Sketch Library</span>
              </label>
              <button type="button" aria-label="Show library" className="ml-auto">
                <Icon w={30} h={22}>
                  <path
                    fillRule="evenodd"
                    d="M15 0C8 0 2.500 4.500 0 11C2.500 17.500 8 22 15 22C22 22 27.500 17.500 30 11C27.500 4.500 22 0 15 0ZM15 4A7 7 0 1 1 15 18A7 7 0 1 1 15 4Z"
                    fill="#7f7f7f"
                  />
                  <circle cx="15" cy="11" r="3.500" fill="#7f7f7f" />
                </Icon>
              </button>
            </li>
            <li className="h-[204px] bg-[#f4f4f4]" />
            <li className="h-[172px]" />
          </ul>
          <div className="flex h-10 border-t-2 border-[#b8b8b8] bg-linear-to-b from-[#fafafa] to-[#f4f4f4]">
            <button type="button" aria-label="Library actions" className="flex w-[68px] items-center justify-center gap-2 border-r-2 border-[#b8b8b8]">
              <GearIcon />
              <Chevron color="#222" />
            </button>
          </div>
        </div>
        <div className="mt-5 flex justify-between pr-px pl-[3px]">
          <button type="button" className={pushButton}>
            Learn More...
          </button>
          <button type="button" className={pushButton}>
            Add Library...
          </button>
        </div>
      </div>
    </div>
  );
}

function Watermark() {
  return (
    <div className="pointer-events-none absolute right-4 bottom-1 flex items-center gap-px text-white/80">
      <Icon w={24} h={28}>
        <path d="M23 2L1 14L23 26" stroke="currentColor" strokeWidth="2.500" />
      </Icon>
      <p className="text-center font-['Lato','Noto_Sans_CJK_SC',sans-serif] text-[19px] leading-5">
        HTML
        <br />
        素材网
      </p>
      <Icon w={24} h={28}>
        <path d="M1 2L23 14L1 26" stroke="currentColor" strokeWidth="2.500" />
      </Icon>
    </div>
  );
}

export default function App() {
  return (
    <div className="relative flex h-screen flex-col overflow-hidden bg-white font-['Inter',sans-serif]">
      <Gradients />
      <AppHeader />
      <div className="flex min-h-0 flex-1">
        <PagesPanel />
        <main className="min-w-0 flex-1 bg-white" />
        <Inspector />
      </div>
      <Preferences />
      <Watermark />
    </div>
  );
}
